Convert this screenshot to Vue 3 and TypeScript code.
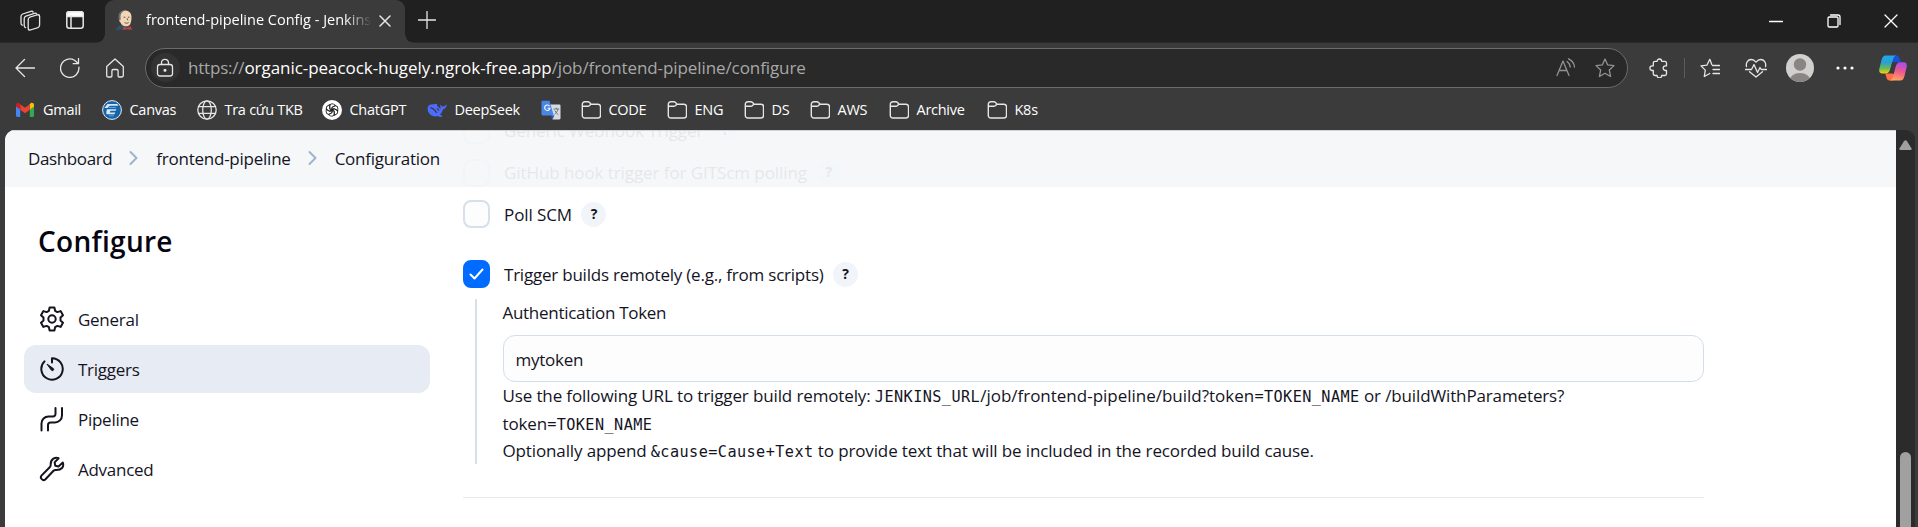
<script setup lang="ts">
import { ref } from 'vue'

interface Bookmark { icon: string; label: string }
interface Section { icon: string; label: string }

const bookmarks: Bookmark[] = [
  { icon: 'gmail', label: 'Gmail' },
  { icon: 'canvas', label: 'Canvas' },
  { icon: 'globe', label: 'Tra cứu TKB' },
  { icon: 'chatgpt', label: 'ChatGPT' },
  { icon: 'deepseek', label: 'DeepSeek' },
  { icon: 'translate', label: '' },
  { icon: 'folder', label: 'CODE' },
  { icon: 'folder', label: 'ENG' },
  { icon: 'folder', label: 'DS' },
  { icon: 'folder', label: 'AWS' },
  { icon: 'folder', label: 'Archive' },
  { icon: 'folder', label: 'K8s' },
]

const sections: Section[] = [
  { icon: 'gear', label: 'General' },
  { icon: 'timer', label: 'Triggers' },
  { icon: 'pipe', label: 'Pipeline' },
  { icon: 'wrench', label: 'Advanced' },
]

const active = ref('Triggers')
const token = ref('mytoken')
const remote = ref(true)
</script>

<template>
  <div class="browser">
    <div class="tabstrip">
      <svg class="ic workspaces" viewBox="0 0 22 22">
        <rect x="8.200" y="6" width="11.400" height="13" rx="2.400" transform="skewY(-17) translate(0 4.200)" />
        <path d="M5.600 17.600c-1-.3-1.400-1-1.400-2V8.500c0-1.200.6-2 1.700-2.400l8.600-2.800c1-.3 1.800 0 2.300.8" />
        <path d="M2.400 15.200C1.500 14.900 1 14.200 1 13.200V6.400c0-1.200.6-2 1.700-2.400l8.200-2.700c1-.3 1.800 0 2.200.8" />
      </svg>
      <svg class="ic panes" viewBox="0 0 18 18">
        <rect x=".8" y=".8" width="16.400" height="16.400" rx="2.500" />
        <path d="M.8 5.500V3.300A2.500 2.500 0 0 1 3.300.8h11.400a2.500 2.500 0 0 1 2.500 2.500v2.200z" fill="#fff" />
        <path d="M5 5v12" />
      </svg>
      <div class="tab">
        <svg class="favicon" viewBox="0 0 18 20">
          <path d="M0 20c.3-2.800 2-4.300 5-4.800l7 .2c2.700.4 4.400 1.800 4.700 4.600z" fill="#335061" />
          <path d="M3.600 4C4.500 1.400 6.600.3 9.500.4c3.700.1 6 2.800 6 6.500 0 2-.2 5-1.200 7-1 1.800-2.500 2.400-4.500 2.400-2.500 0-4.500-1.500-5.500-4C2.700 11.400 2.400 6.500 3.600 4z" fill="#f0d6b7" />
          <path d="M9 .4C5.500.2 3 2.200 2.600 5c-.3 2 .1 4.700 1.400 6l.7-2.400C4 6 4.800 3.300 6.600 1.800z" fill="#6d6b6d" />
          <path d="M7.600 7.200h1.800m2.500 0h1.600M8.500 12.600c1.500.8 3 .7 4.200 0M11 8.300l.8 2" stroke="#49372f" stroke-width=".8" fill="none" />
          <path d="M7.500 16.300 11 18l3.800-1.800.6 3.800-4.200-1-3.800 1z" fill="#d33833" />
        </svg>
        <span class="title">frontend-pipeline Config - Jenkins</span>
        <svg class="ic close" viewBox="0 0 12 12"><path d="m1 1 10 10M11 1 1 11" /></svg>
      </div>
      <svg class="ic plus" viewBox="0 0 18 18"><path d="M9 .5v17M.5 9h17" /></svg>
      <div class="winbuttons">
        <svg class="ic" viewBox="0 0 14 14"><path d="M.5 7.500h13" /></svg>
        <svg class="ic" viewBox="0 0 14 14"><rect x="1" y="3" width="10" height="10" rx="1.200" /><path d="M3.500 1H11a2 2 0 0 1 2 2v7.500" /></svg>
        <svg class="ic" viewBox="0 0 14 14"><path d="m1 1 12 12M13 1 1 13" /></svg>
      </div>
    </div>

    <div class="toolbar">
      <div class="navbuttons">
        <svg class="ic" viewBox="0 0 20 20"><path d="M19.500 10H1M9.500 1.500 1 10l8.500 8.500" /></svg>
        <svg class="ic" viewBox="0 0 20 20"><path d="M18.900 9.200A9.200 9.200 0 1 1 14.500 2.300L18.300 5.500M18.500.5v5.200h-5.300" /></svg>
        <svg class="ic" viewBox="0 0 20 20"><path d="M1.700 8.400 10 1l8.300 7.400v9a1.600 1.600 0 0 1-1.600 1.600h-2.600a1 1 0 0 1-1-1v-5a1.500 1.500 0 0 0-1.500-1.500H8.400A1.500 1.500 0 0 0 6.900 13v5a1 1 0 0 1-1 1H3.300a1.600 1.600 0 0 1-1.600-1.600z" /></svg>
      </div>
      <div class="address">
        <span class="lock">
          <svg class="ic" viewBox="0 0 18 20"><rect x="1.500" y="6.500" width="15" height="11.500" rx="2.500" /><path d="M5.500 6.500V4.800a3.500 3.500 0 0 1 7 0v1.700" /><circle cx="9" cy="12.300" r=".9" fill="#fff" /></svg>
        </span>
        <span class="url"><span class="scheme">https://</span><b>organic-peacock-hugely.ngrok-free.app</b><span class="path">/job/frontend-pipeline/configure</span></span>
        <svg class="ic dim" viewBox="0 0 20 20"><path d="M1 17.500 7 3l6 14.500M3 12.500h8M11 3.500c2 1.300 3 3 3.200 5.500M12.500.8c3.500 1.700 5.700 4.500 6 8.200" /></svg>
        <svg class="ic dim" viewBox="0 0 20 20"><path d="m10 1 2.700 5.900 6.300.7-4.700 4.400 1.300 6.500L10 15.300l-5.600 3.200L5.700 12 1 7.600l6.300-.7z" /></svg>
      </div>
      <div class="actions">
        <svg class="ic" viewBox="0 0 20 20"><path d="M4.300 5A1.700 1.700 0 0 1 6 3.300h2.100a2.300 2.300 0 0 1 4.600 0h3.100A1.700 1.700 0 0 1 17.500 5v2.900h-1a2.300 2.300 0 0 0 0 4.600h1v3.300a1.700 1.700 0 0 1-1.700 1.700h-3.100a2.300 2.300 0 0 1-4.600 0H6a1.700 1.700 0 0 1-1.700-1.700v-3.300H3.200a2.300 2.300 0 0 1 0-4.600h1.100z" /></svg>
        <i class="sep"></i>
        <svg class="ic" viewBox="0 0 20 20"><path d="m11.800 6.500-2-5.200-2.900 5.900-5.900.7 4.300 4.200-1 6.400 5.400-3M12.500 7.500h7M13 11.500h6.500M13 15.500h6.500" /></svg>
        <svg class="ic heart" viewBox="0 0 22 20"><path d="M1.500 8.500C.6 4.700 3 1.500 6.200 1.500c2 0 3.500 1 4.800 2.600 1.300-1.600 2.800-2.600 4.800-2.600 3.200 0 5.600 3.200 4.700 7M.5 11.500h6L9 6.500l3.500 8 2.500-5 1.200 2h5.300M4.500 13.700 11 19l6.500-5.300" /></svg>
        <svg class="avatar" viewBox="0 0 28 28">
          <defs><clipPath id="disc"><circle cx="14" cy="14" r="14" /></clipPath></defs>
          <g clip-path="url(#disc)"><path d="M0 0h28v28H0z" fill="#d2d0ce" /><circle cx="14" cy="10.500" r="6.200" fill="#8a8583" /><ellipse cx="14" cy="27" rx="10.500" ry="8" fill="#8a8583" /></g>
        </svg>
        <svg class="dots" viewBox="0 0 18 4"><circle cx="2" cy="2" r="1.600" /><circle cx="9" cy="2" r="1.600" /><circle cx="16" cy="2" r="1.600" /></svg>
        <svg class="copilot" viewBox="0 0 28 26">
          <defs>
            <linearGradient id="cool" x1="0" y1="0" x2="0" y2="1"><stop offset="0" stop-color="#20a8ee" /><stop offset=".4" stop-color="#2b9fd0" /><stop offset=".72" stop-color="#6dbb52" /><stop offset="1" stop-color="#f5d410" /></linearGradient>
            <linearGradient id="warm" x1=".4" y1="0" x2=".2" y2="1"><stop offset="0" stop-color="#a94ee8" /><stop offset=".45" stop-color="#f0588c" /><stop offset="1" stop-color="#ffab5c" /></linearGradient>
          </defs>
          <path d="M14 .5h3.500c2 0 2.700 1.500 3.400 4l.8 2.700h-4.500L12 7z" fill="#1a50d8" />
          <path d="M14 25.500h-3.500c-2 0-2.700-1.500-3.400-4l-.8-3H13l3 1z" fill="#ff7047" />
          <path d="M6.800.5H17c-2 .6-2.600 2.500-3.300 5l-2.300 8.300c-.9 3-2.100 4.700-4.900 4.700H3.300C.5 18.500-.3 16.500.4 13.500L2.500 5C3.300 2 4.500.5 6.800.5z" fill="url(#cool)" />
          <path d="M21.200 25.500H11c2-.6 2.600-2.500 3.300-5l2.300-8.500c.9-3 2.100-4.700 4.900-4.700h3.200c2.800 0 3.600 2 2.900 5L25.500 21c-.8 3-2 4.500-4.300 4.500z" fill="url(#warm)" />
          <path d="m13.300 7.300-3 10.700h3.500L16.700 8z" fill="#3b3b3b" />
        </svg>
      </div>
    </div>

    <div class="bookmarks">
      <div v-for="(b, i) in bookmarks" :key="i" class="bookmark">
        <svg v-if="b.icon === 'gmail'" viewBox="0 0 20 20">
          <path d="M1 5.200v10.300c0 .8.600 1.400 1.400 1.400H5.200V8.500z" fill="#4285f4" /><path d="M19 5.200v10.300c0 .8-.6 1.400-1.400 1.400h-2.800V8.500z" fill="#34a853" />
          <path d="M14.800 4.200v5.500L19 6.500V5c0-1.900-2-2.800-3.400-1.700z" fill="#fbbc04" /><path d="M5.200 9.700V4.200L10 7.800l4.800-3.600v5.500L10 13.300z" fill="#ea4335" /><path d="M1 5v1.500l4.200 3.200V4.200l-.8-.9C3 2.200 1 3.100 1 5z" fill="#c5221f" />
        </svg>
        <svg v-else-if="b.icon === 'canvas'" viewBox="0 0 20 20">
          <circle cx="10" cy="10" r="9.400" fill="#1763a8" stroke="#e4eef8" stroke-width="1" /><path d="M5.500 4h9.800l1.200 1.800H7.800L5.500 8H2.300zM5 9.200h9.500l-.8 1.500H8.500l-.8 1.800h5.600l-.8 1.700H4.500C4.200 12.500 4.300 11 5 9.200z" fill="#d6e8f8" /><path d="M7 7.500h7M7 15.800h5" stroke="#5ea3dc" />
        </svg>
        <svg v-else-if="b.icon === 'globe'" class="ic" viewBox="0 0 20 20"><circle cx="10" cy="10" r="9.200" /><ellipse cx="10" cy="10" rx="4.300" ry="9.200" /><path d="M1.500 6.700h17M1.500 13.300h17" /></svg>
        <svg v-else-if="b.icon === 'chatgpt'" viewBox="0 0 20 20">
          <circle cx="10" cy="10" r="10" fill="#fff" />
          <g fill="none" stroke="#222" stroke-width=".9">
            <path v-for="a in 6" :key="a" d="M7.700 8.700V6.200a2.500 2.500 0 0 1 3.700-2.100l2.200 1.300-3.900 2.200v4.600" :transform="`rotate(${a * 60} 10 10)`" />
          </g>
        </svg>
        <svg v-else-if="b.icon === 'deepseek'" viewBox="0 0 20 20">
          <path d="M.6 7.800C1.200 4.800 3.800 4 6.800 4.300c1.200.1 2-.6 3-.4.8.2-.3 1.200.3 1.800 1 1 2.400 2 3.200 3.300.6-.7.300-2-.2-3.200-.2-.7.300-1 .7-.5.6.8 1.300 1.400 2.300 1.300 1.200-.1 1.700-1.200 2.900-1.700.6-.2.9.1.7.7-.7 2.300-2.200 3.600-3.900 4-.5 2-1.300 3.800-2.800 5.200.7.5 1.500.7 2.200.9.500.2.500.6 0 .8-1.700.7-3.300.5-4.700-.4C5.500 17.600.1 13.500.6 7.800z" fill="#4d6bfe" /><path d="M3.300 7.600c2.700.3 4.500 2.400 6.500 5.300M9.800 8.700c1 .3 1.700 1.100 1.900 2" stroke="#3b3b3b" stroke-width="1.300" fill="none" />
        </svg>
        <svg v-else-if="b.icon === 'translate'" viewBox="0 0 20 20">
          <path d="M9 4.500h9.300c.7 0 1.200.5 1.200 1.200v12.600c0 .7-.5 1.200-1.200 1.200H11.500z" fill="#d9dbde" /><path d="M1.700.8h6.800l4.300 14.700H1.700C1 15.500.5 15 .5 14.300V2C.5 1.300 1 .8 1.700.8z" fill="#4a86e8" /><path d="m9.500 15.500 2 4 2-4z" fill="#2a56c6" />
          <path d="M8.600 6.200A2.700 2.700 0 1 0 9 8.300H6.500" fill="none" stroke="#fff" stroke-width="1.100" /><path d="M12.500 9h5.700M15.300 7.700V9M17 9c-.5 2.500-2 4.300-3.500 5.300M13.800 10.500c.8 1.800 2.200 3.200 3.600 4.300" fill="none" stroke="#607988" stroke-width=".95" />
        </svg>
        <svg v-else class="ic folder" viewBox="0 0 20 20"><path d="M1.300 4.300a2.500 2.500 0 0 1 2.500-2.500h3.100c.7 0 1.300.3 1.700.8l1.500 1.600h6.900a2.500 2.500 0 0 1 2.500 2.500v8.800a2.500 2.500 0 0 1-2.500 2.500H3.800a2.500 2.500 0 0 1-2.500-2.500zM1.300 6.300h5.500c.6 0 1.100-.2 1.500-.6l1.500-1.500" /></svg>
        <span v-if="b.label">{{ b.label }}</span>
      </div>
    </div>

    <div class="viewport">
      <div class="page">
        <header class="crumbs">
          <span>Dashboard</span>
          <svg viewBox="0 0 10 16"><path d="m1.500 2 6 6-6 6" /></svg>
          <span>frontend-pipeline</span>
          <svg viewBox="0 0 10 16"><path d="m1.500 2 6 6-6 6" /></svg>
          <span>Configuration</span>
        </header>

        <aside>
          <h1>Configure</h1>
          <nav>
            <a v-for="s in sections" :key="s.label" :class="{ active: s.label === active }" @click="active = s.label">
              <svg viewBox="0 0 26 26">
                <template v-if="s.icon === 'gear'">
                  <path d="M10.600 1.500h4.800l.7 3.300 2.300 1.300 3.200-1 2.400 4.100-2.500 2.300v3l2.500 2.300-2.400 4.100-3.200-1-2.300 1.300-.7 3.300h-4.800l-.7-3.300-2.300-1.300-3.200 1L2 16.800l2.500-2.300v-3L2 9.200l2.400-4.100 3.200 1 2.300-1.300z" /><circle cx="13" cy="13" r="3.700" />
                </template>
                <template v-else-if="s.icon === 'timer'">
                  <path d="M13 6.500V2.300a10.700 10.700 0 1 1-7.500 3.100" /><path d="m8.300 8.300 6 4.200a1.200 1.200 0 0 1-1.800 1.800z" fill="#14141f" stroke-width="1" />
                </template>
                <template v-else-if="s.icon === 'pipe'">
                  <path d="M2.500 24.500v-7a7 7 0 0 1 7-7H14a2.500 2.500 0 0 0 2.500-2.500V2M9 24.500v-5.600a2.500 2.500 0 0 1 2.500-2.500H16a7 7 0 0 0 7-7V2" />
                </template>
                <path v-else d="M23.800 6.600l-4.300 3.800-3.200-.7-.7-3.300 4-4.200c-3-1.300-8.200.3-7.900 6.600 0 1-.2 1.700-1 2.400l-8 8.200c-2.400 2.500 1.200 6.200 3.800 3.800l8-8.400c.7-.7 1.500-.9 2.500-.8 5.500.2 8.300-3 6.800-7.400z" />
              </svg>
              <span>{{ s.label }}</span>
            </a>
          </nav>
        </aside>

        <main>
          <div class="row r1"><i class="box"></i><span>Generic Webhook Trigger</span><em>?</em></div>
          <div class="row r2"><i class="box"></i><span>GitHub hook trigger for GITScm polling</span><em>?</em></div>
          <div class="row r3"><i class="box"></i><span>Poll SCM</span><em>?</em></div>
          <div class="row r4">
            <i class="box" :class="{ on: remote }" @click="remote = !remote"><svg viewBox="0 0 15 12"><path d="m1.500 6.500 4 4 8-9" /></svg></i>
            <span>Trigger builds remotely (e.g., from scripts)</span><em>?</em>
          </div>
          <div class="nested">
            <label>Authentication Token</label>
            <input v-model="token" type="text" />
            <p>Use the following URL to trigger build remotely: <code>JENKINS_URL</code><span class="link">/job/frontend-pipeline/build?token=</span><code>TOKEN_NAME</code> or /buildWithParameters?</p>
            <p class="second">token=<code>TOKEN_NAME</code></p>
            <p>Optionally append <code>&amp;cause=Cause+Text</code> to provide text that will be included in the recorded build cause.</p>
          </div>
          <hr />
        </main>
      </div>
      <div class="scrollbar">
        <svg viewBox="0 0 13 11"><path d="M5 1.300Q6.500-.6 8 1.300L12.600 8.500Q13 10 11.500 10h-10Q0 10 .4 8.500z" /></svg>
        <i></i>
      </div>
    </div>
  </div>
</template>

<style>
html, body { background: #3b3b3b; overflow: hidden; }
</style>

<style scoped>
* { box-sizing: border-box; }
.browser {
  width: 1918px; height: 527px; overflow: hidden; display: flex; flex-direction: column;
  background: #3b3b3b; color: #fff;
  font-family: "Open Sans", "Noto Sans", sans-serif; font-size: 14.5px;
}
svg { display: block; flex: none; }
.ic { fill: none; stroke: #e6e6e6; stroke-width: 1.3; stroke-linecap: round; stroke-linejoin: round; width: 20px; height: 20px; }

.tabstrip { height: 43px; flex: none; display: flex; align-items: center; background: #202020; padding-left: 20px; border-bottom: 1px solid #2b2b2b; }
.tabstrip .workspaces { width: 22px; height: 22px; margin-top: -1px; }
.tabstrip .panes { width: 18px; height: 18px; margin: -2px 0 0 24px; stroke-width: 1.5; }
.tab {
  position: relative; align-self: stretch; width: 300px; height: 43px; margin-left: 21px;
  border-radius: 9px 9px 0 0; background: #3b3b3b;
  display: flex; align-items: center; padding: 0 14px 4px 11px;
}
.tab::before, .tab::after { content: ""; position: absolute; bottom: 0; width: 9px; height: 9px; }
.tab::before { left: -9px; background: radial-gradient(circle at 0 0, transparent 8.5px, #3b3b3b 9px); }
.tab::after { right: -9px; background: radial-gradient(circle at 100% 0, transparent 8.5px, #3b3b3b 9px); }
.favicon { width: 18px; height: 20px; }
.title {
  width: 225px; margin-left: 12px; overflow: hidden; white-space: nowrap;
  -webkit-mask-image: linear-gradient(90deg, #000 198px, transparent 226px); mask-image: linear-gradient(90deg, #000 198px, transparent 226px);
}
.tab .close { width: 12px; height: 12px; margin: 3px 0 0 8px; stroke-width: 1.5; }
.tabstrip .plus { width: 18px; height: 18px; margin: -3px 0 0 13px; }
.winbuttons { margin-left: auto; display: flex; gap: 43.5px; padding-right: 20px; }
.winbuttons .ic { width: 14px; height: 14px; stroke: #fff; }

.toolbar { height: 50px; flex: none; display: flex; align-items: center; padding: 0 0 1px 15px; }
.navbuttons { display: flex; gap: 25px; }
.address {
  margin-left: 20px; width: 1483px; height: 40px; border: 1px solid #6b6b6b; border-radius: 20px; background: #292929;
  display: flex; align-items: center; padding: 0 12px 0 5px;
}
.lock { width: 29px; height: 29px; border-radius: 50%; background: #333; display: grid; place-items: center; }
.lock .ic { width: 18px; height: 20px; margin-left: -1px; }
.url { margin: 0 auto 0 8px; font-size: 17px; letter-spacing: -.09px; color: #a8a8a8; white-space: nowrap; }
.url b { font-weight: 400; color: #fff; letter-spacing: -.05px; }
.url .scheme { letter-spacing: -.2px; }
.address .dim { stroke: #929292; margin-left: 19px; }
.actions { display: flex; align-items: center; padding-left: 21px; }
.sep { width: 1px; height: 20px; margin: 0 15px; background: #5b5b5b; }
.heart { width: 22px; margin-left: 25px; }
.avatar { width: 28px; height: 28px; margin-left: 19px; }
.dots { width: 18px; height: 4px; margin-left: 22px; fill: #fff; }
.copilot { width: 28px; height: 26px; margin-left: 25px; }

.bookmarks {
  height: 37px; flex: none; padding-left: 15px; display: grid; align-items: center;
  grid-template-columns: 86.500px 95px 125px 105px 114px 40px 86px 77px 66px 79px 98px 80px;
  padding-bottom: 4px;
}
.bookmark { display: flex; align-items: center; gap: 8px; letter-spacing: -.27px; white-space: nowrap; }
.bookmark svg { width: 20px; height: 20px; }
.bookmark span { margin-top: -1px; }
.bookmark .folder { stroke-width: 1.4; }

.viewport { flex: 1; min-height: 0; display: flex; padding: 0 3px 0 5px; }
.page {
  position: relative; width: 1891px; overflow: hidden; background: #fff; border-radius: 10px 0 0 0;
  display: flex; align-items: flex-start; color: #14141f; font-size: 17px;
}
.crumbs {
  position: absolute; inset: 0 0 auto 0; height: 57px; z-index: 1;
  display: flex; align-items: center; padding: 0 0 2px 23px; letter-spacing: -.24px;
  background: rgba(244, 246, 249, .93); border-top: 1px solid #d4d4d4;
}
.crumbs span:first-child { letter-spacing: -.38px; }
.crumbs svg { width: 10px; height: 16px; margin: 0 17px 0 17px; fill: none; stroke: #9fb3cf; stroke-width: 2; stroke-linecap: round; stroke-linejoin: round; }
aside { width: 406px; flex: none; margin-left: 19px; padding-top: 91px; }
h1 { margin: 0 0 34px 14px; font-size: 28px; line-height: 40px; font-weight: 600; letter-spacing: .3px; color: #05050f; }
nav { display: flex; flex-direction: column; gap: 2px; }
nav a { height: 48px; border-radius: 12px; display: flex; align-items: center; padding-left: 15px; letter-spacing: -.27px; }
nav a.active { background: #e7ebf3; }
nav svg { width: 26px; height: 26px; margin-top: -1px; fill: none; stroke: #14141f; stroke-width: 2; stroke-linecap: round; stroke-linejoin: round; }
nav span { margin-left: 13px; }

main { width: 1241px; margin: -21px 0 0 33px; }
.row { display: flex; align-items: center; letter-spacing: -.22px; }
.r1, .r2 { height: 42.500px; letter-spacing: -.08px; }
.r3 { height: 40px; letter-spacing: -.1px; }
.r4 { height: 48px; margin-top: 16px; }
.box { width: 27px; height: 28px; border: 2px solid #d6dfea; border-radius: 8px; background: #fdfdfd; margin-right: 14px; display: grid; place-items: center; }
.box.on { background: #006bff; border-color: #006bff; }
.box svg { width: 15px; height: 12px; fill: none; stroke: #fff; stroke-width: 2; stroke-linecap: round; stroke-linejoin: round; }
em {
  width: 25px; height: 25px; margin-left: 9.5px; border-radius: 50%; background: #f1f4f9;
  font-style: normal; font-weight: 700; font-size: 14px; line-height: 24px; text-align: center; letter-spacing: 0;
}
.nested { margin: 1px 0 0 12px; height: 165px; padding-left: 25.500px; border-left: 2px solid #d6dfea; display: flex; flex-direction: column; }
label { height: 36px; line-height: 27px; letter-spacing: -.29px; }
input {
  width: 1201px; height: 47px; flex: none; border: 1px solid #d3dee9; border-radius: 12px; background: #fdfdfd; outline: none;
  padding: 2px 12px 0; font: inherit; color: inherit; letter-spacing: -.25px;
}
p { margin: 0; line-height: 27px; letter-spacing: -.13px; white-space: nowrap; }
p.second { padding-top: 1px; }
.link { letter-spacing: -.01px; }
code { font-family: "DejaVu Sans Mono", monospace; font-size: 15.2px; line-height: 1; letter-spacing: .43px; }
hr { margin: 33px 0 0; border: 0; height: 1px; background: #e6eaef; }

.scrollbar { width: 19px; background: #2b2b2b; border-radius: 0 9px 0 0; display: flex; flex-direction: column; align-items: center; }
.scrollbar svg { width: 13px; height: 11px; margin-top: 10px; fill: #a0a0a0; }
.scrollbar i { width: 11px; flex: 1; margin-top: 301px; border-radius: 6px 6px 0 0; background: #a0a0a0; }
</style>
